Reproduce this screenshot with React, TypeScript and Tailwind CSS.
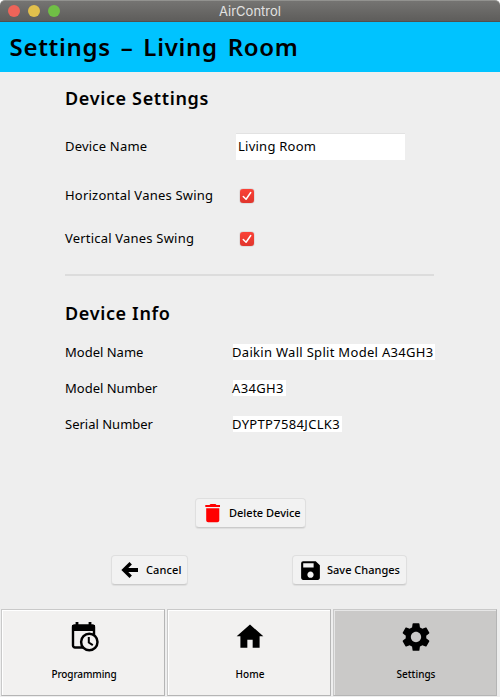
import React from "react";

const font = "font-['Noto_Sans',sans-serif]";

function Check() {
  return (
    <span className="ml-[175px] flex size-[14px] shrink-0 items-center justify-center rounded-[3px] bg-gradient-to-b from-[#fb4136] to-[#e0352c] shadow-[0_0_1px_rgba(90,40,40,0.85)]">
      <svg viewBox="0 0 15 15" className="size-[14px]" fill="none" stroke="#fff" strokeWidth="1.6" strokeLinecap="round" strokeLinejoin="round">
        <path d="M3.500 8 6.500 11 11.500 3.800" />
      </svg>
    </span>
  );
}

function InfoRow({ label, labelClass, value, valueClass }: { label: string; labelClass: string; value: string; valueClass: string }) {
  return (
    <div className="flex h-4 items-center">
      <span className={`w-[168px] shrink-0 pt-px ${labelClass}`}>{label}</span>
      <span className={`-indent-px h-4 bg-white leading-4 ${valueClass}`}>{value}</span>
    </div>
  );
}

const button =
  "flex h-[30px] shrink-0 items-center rounded-[4px] border border-[#dfdfdf] border-b-[#cbcbcb] bg-[#f2f2f2] text-[11px] font-medium shadow-[0_1px_1px_rgba(0,0,0,0.07)]";
const tab =
  "flex h-[87px] w-[164px] flex-col items-center border border-t-[#c9c9c9] border-l-[#c9c9c9] border-r-[#b5b5b5] border-b-[#b5b5b5] pt-[11px] text-[10px] font-medium leading-[14px]";

export default function App() {
  return (
    <div className={`flex h-[697px] w-[500px] flex-col overflow-hidden whitespace-nowrap bg-[#eeeeee] text-[13px] text-black ${font}`}>
      <div className="h-[22px] shrink-0 bg-white">
        <div className="grid h-[22px] grid-cols-3 items-center rounded-t-[5px] border-t border-b border-t-[#92928f] border-b-[#50504e] bg-gradient-to-b from-[#757472] to-[#5e5d5b]">
          <div className="flex gap-2 pl-2">
            <i className="size-3 rounded-full bg-[#ee6459]" />
            <i className="size-3 rounded-full bg-[#e1c04c]" />
            <i className="size-3 rounded-full bg-[#70bf45]" />
          </div>
          <span className="pt-px text-center font-['Inter',sans-serif] text-[13px] text-[#e2e2e1]">AirControl</span>
        </div>
      </div>

      <header className="flex h-[50px] shrink-0 items-center bg-[#00c3ff] pl-[9.500px]">
        <h1 className="text-[24px] font-semibold tracking-[0.7px] [word-spacing:3px]">Settings – Living Room</h1>
      </header>

      <main className="flex h-[537px] shrink-0 flex-col pl-[65px]">
        <h2 className="mt-[14px] h-6 text-[18px] font-semibold leading-6 tracking-[0.65px]">Device Settings</h2>
        <div className="mt-[23px] flex h-[27px] items-center">
          <span className="w-[171px] tracking-[0.2px]">Device Name</span>
          <span className="flex h-[27px] w-[169px] items-center border-t border-[#e2e2e2] bg-white pl-[2px] tracking-[0.25px]">Living Room</span>
        </div>
        <div className="mt-[26px] flex h-5 items-center">
          <span className="w-0 tracking-[0.22px]">Horizontal Vanes Swing</span>
          <Check />
        </div>
        <div className="mt-[23px] flex h-5 items-center">
          <span className="w-0 tracking-[0.2px]">Vertical Vanes Swing</span>
          <Check />
        </div>
        <div className="mt-[25px] h-[2px] w-[369px] shrink-0 bg-[#dcdcdc]" />
        <h2 className="mt-[25px] h-6 text-[18px] font-semibold leading-6 tracking-[0.65px]">Device Info</h2>
        <div className="mt-[19px] flex flex-col gap-5">
          <InfoRow label="Model Name" labelClass="tracking-normal" value="Daikin Wall Split Model A34GH3" valueClass="w-[202px] tracking-[0.3px]" />
          <InfoRow label="Model Number" labelClass="tracking-normal" value="A34GH3" valueClass="w-[53px] tracking-[0.35px]" />
          <InfoRow label="Serial Number" labelClass="tracking-normal" value="DYPTP7584JCLK3" valueClass="w-[109px] tracking-[0.32px]" />
        </div>

        <button className={`${button} mt-[66px] ml-[130px] w-[111px] pl-[5px]`}>
          <svg viewBox="0 0 24 24" className="size-6" fill="#ff0000">
            <path d="M5.200 19.300c0 1.100.9 2 2 2h9.100c1.100 0 2-.9 2-2V7.200H5.200zM19 4h-3.500l-1-1h-5l-1 1H4.300v2H19z" />
          </svg>
          <span className="ml-1">Delete Device</span>
        </button>
        <div className="mt-[27px] flex">
          <button className={`${button} ml-[46px] w-[77px] pl-[9px]`}>
            <svg viewBox="0 0 18 18" className="size-[18px]" fill="none" stroke="#000">
              <path d="M17 9H4" strokeWidth="4" />
              <path d="M9.700 2.200 2.800 9l6.900 6.800" strokeWidth="3.400" />
            </svg>
            <span className="ml-[7px] tracking-[0.1px]">Cancel</span>
          </button>
          <button className={`${button} ml-[104px] w-[115px] pl-[5px]`}>
            <svg viewBox="0 0 24 24" className="size-[25px]" fill="#000">
              <path d="M17 3H5a2 2 0 0 0-2 2v14c0 1.100.890 2 2 2h14c1.100 0 2-.9 2-2V7zm-5 16c-1.660 0-3-1.340-3-3s1.340-3 3-3 3 1.340 3 3-1.340 3-3 3m3-10H5V5h10z" />
            </svg>
            <span className="ml-1">Save Changes</span>
          </button>
        </div>
      </main>

      <nav className="flex h-[88px] shrink-0 gap-[2px] pl-px">
        <button className={`${tab} bg-[#f2f1f0] shadow-[inset_1px_1px_0_#fff]`}>
          <svg viewBox="0 0 30 32" className="ml-[6px] h-8 w-[30px]" fill="none" stroke="#000">
            <path d="M6 1v5M19 1v5" strokeWidth="2.800" />
            <path d="M12 26.500H4a2 2 0 0 1-2-2V6a1.500 1.500 0 0 1 1.500-1.500h18A1.500 1.500 0 0 1 23 6v8" strokeWidth="2.400" />
            <path d="M1 4h23v6H1z" fill="#000" stroke="none" />
            <circle cx="18.300" cy="21" r="8.200" fill="#f2f1f0" strokeWidth="2.500" />
            <path d="M17.800 16v5.500l4 2.700" strokeWidth="2" />
          </svg>
          <span className="mt-[14px] ml-[2px] tracking-[-0.1px]">Programming</span>
        </button>
        <button className={`${tab} bg-[#f2f1f0] shadow-[inset_1px_1px_0_#fff]`}>
          <svg viewBox="0 0 24 24" className="ml-[2px] size-8" fill="#000">
            <path d="M10 20v-6h4v6h5.200v-8.500H22L12 2.700 2 11.500h2.800V20z" />
          </svg>
          <span className="mt-[14px] ml-[2px]">Home</span>
        </button>
        <button className={`${tab} bg-[#cac9c8] shadow-[inset_1px_1px_0_#e6e6e6]`}>
          <svg viewBox="0.800 0.800 22.400 22.400" className="ml-[2px] size-8" fill="#000">
            <path d="M19.140 12.940c.04-.3.06-.61.06-.94 0-.32-.02-.64-.07-.94l2.030-1.580c.18-.14.23-.41.12-.61l-1.920-3.320c-.12-.22-.37-.29-.59-.22l-2.390.96c-.5-.38-1.030-.7-1.620-.94L14.400 2.810c-.04-.24-.24-.41-.48-.41h-3.840c-.24 0-.43.17-.47.41l-.36 2.540c-.59.24-1.130.57-1.620.94l-2.390-.96c-.22-.08-.47 0-.59.22L2.740 8.870c-.12.21-.08.47.12.61l2.030 1.580c-.05.3-.09.63-.09.94s.02.64.07.94l-2.030 1.580c-.18.14-.23.41-.12.61l1.920 3.320c.12.22.37.29.59.22l2.390-.96c.5.38 1.030.7 1.620.94l.36 2.540c.05.24.24.41.48.41h3.840c.24 0 .44-.17.47-.41l.36-2.540c.59-.24 1.130-.56 1.620-.94l2.390.96c.22.08.47 0 .59-.22l1.920-3.320c.12-.22.07-.47-.12-.61zM12 15.600c-1.980 0-3.600-1.620-3.600-3.600s1.620-3.600 3.600-3.600 3.600 1.620 3.600 3.600-1.620 3.600-3.600 3.600" />
          </svg>
          <span className="mt-[14px] ml-[2px]">Settings</span>
        </button>
      </nav>
    </div>
  );
}
